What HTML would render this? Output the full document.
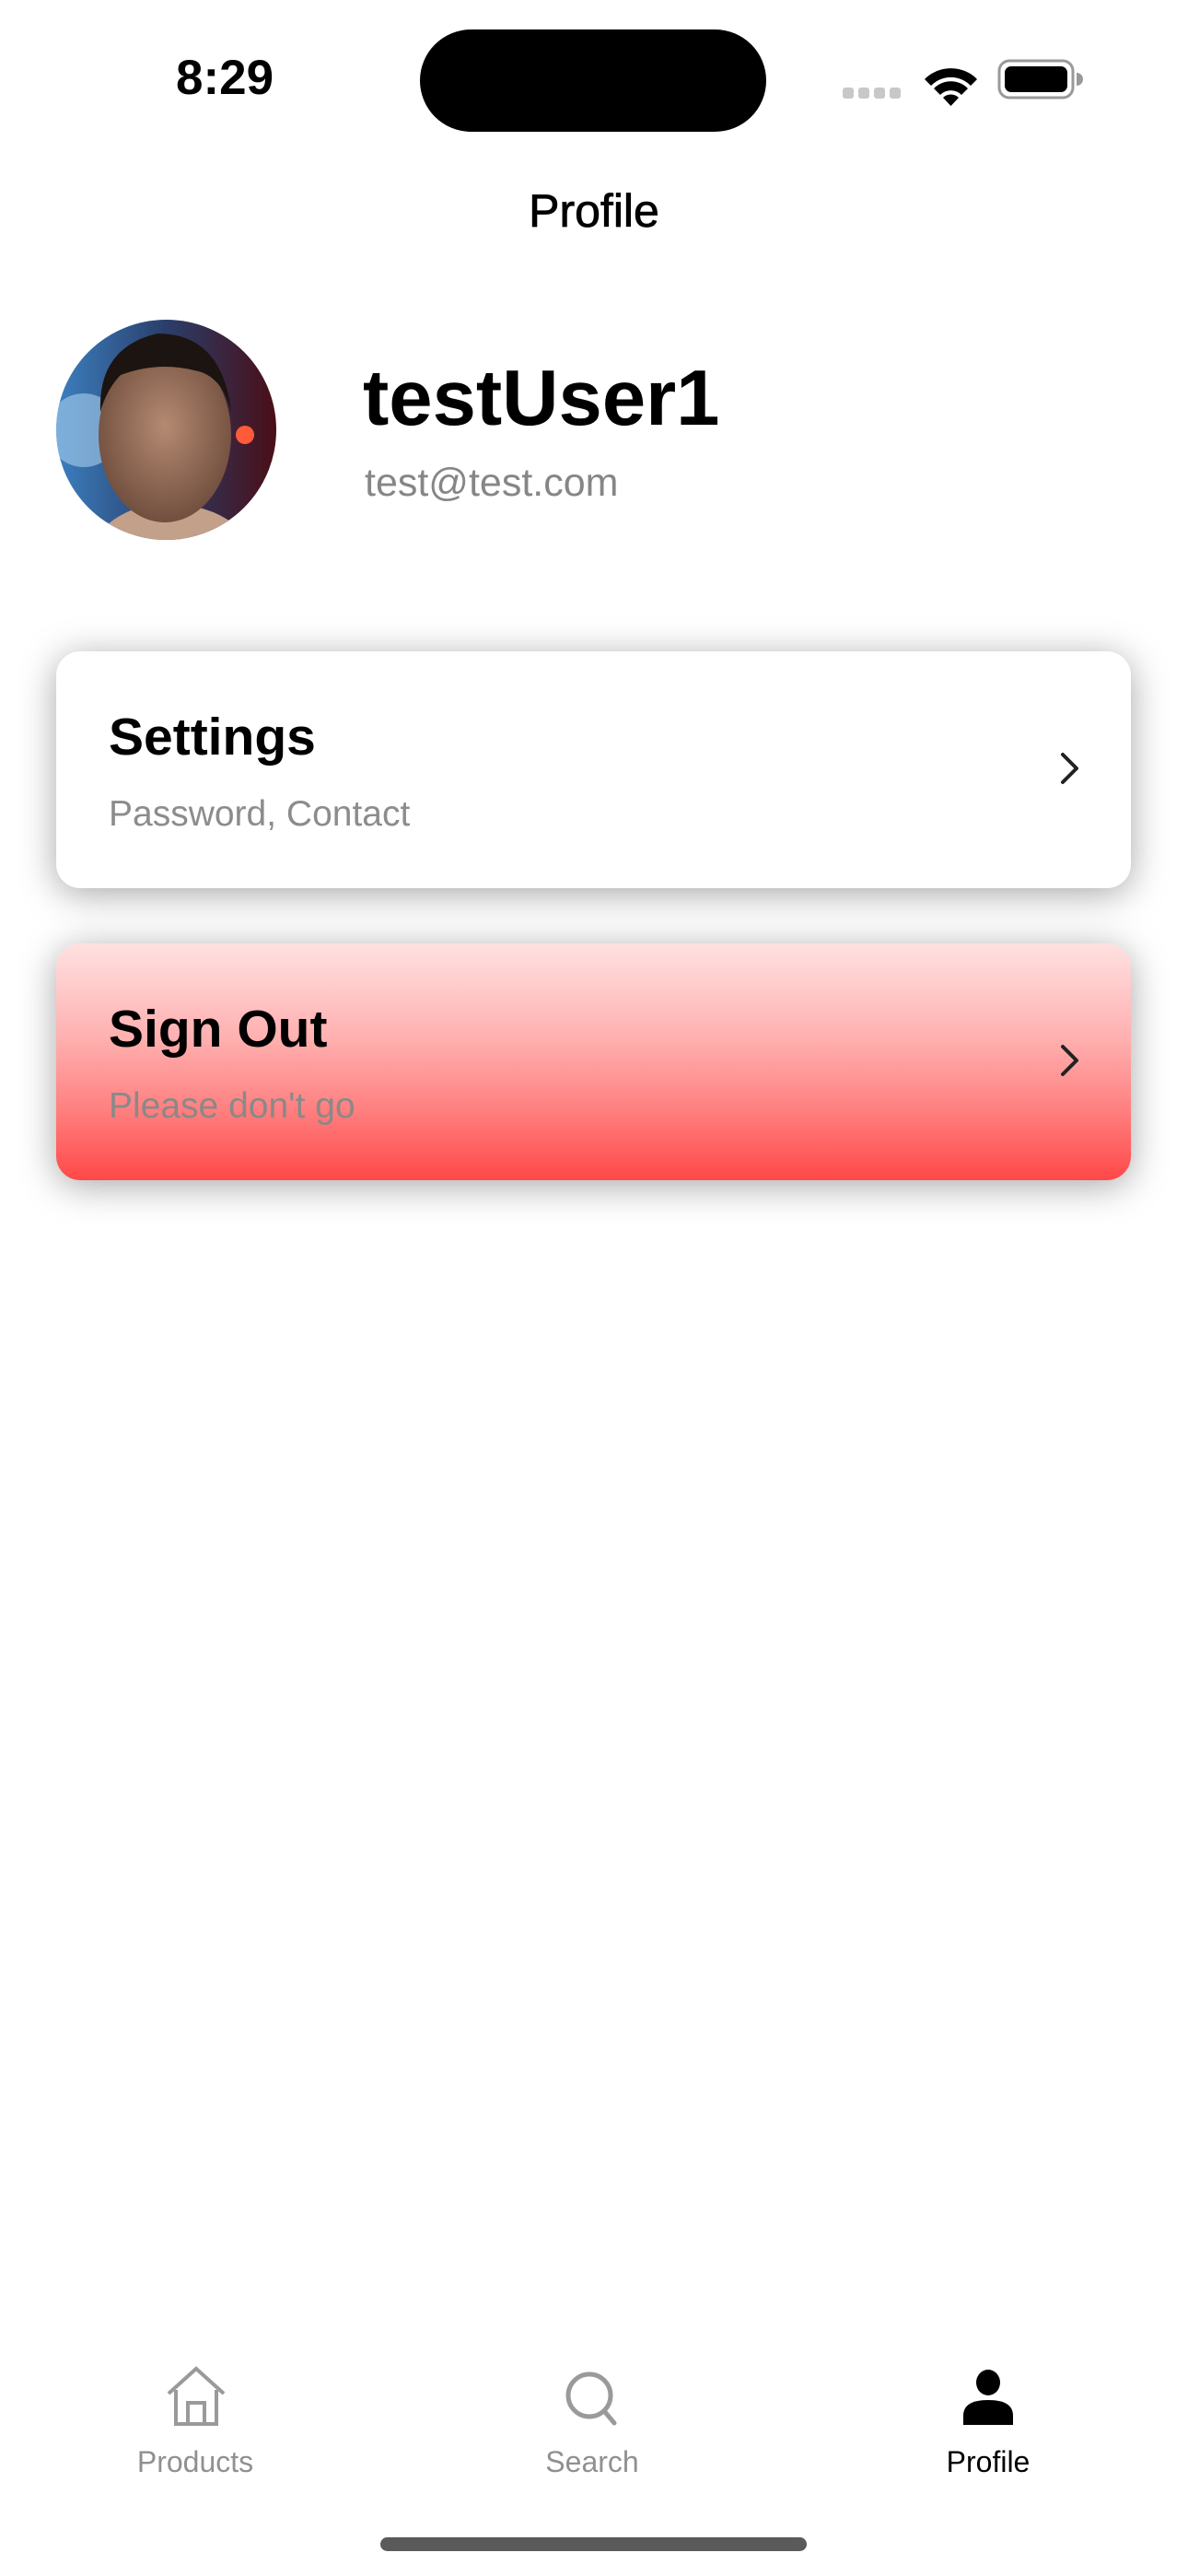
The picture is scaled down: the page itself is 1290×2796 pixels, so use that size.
<!DOCTYPE html>
<html><head><meta charset="utf-8">
<style>
html,body{margin:0;padding:0;background:#fff;}
body{width:1290px;height:2796px;position:relative;overflow:hidden;font-family:"Liberation Sans",sans-serif;}
.abs{position:absolute;}
.card{position:absolute;left:61px;width:1167px;height:257px;border-radius:26px;box-shadow:0 6px 40px rgba(0,0,0,0.35);}
.ttl{position:absolute;left:57px;font-weight:bold;font-size:57px;color:#000;line-height:1;}
.sub{position:absolute;left:57px;font-size:39px;color:#8c8c8c;line-height:1;}
.chev{position:absolute;left:1090px;}
.lbl{position:absolute;font-size:32px;width:240px;text-align:center;line-height:1;}
</style></head><body>

<div class="abs" style="left:191px;top:58px;font-size:53px;font-weight:bold;line-height:1;">8:29</div>
<div class="abs" style="left:456px;top:32px;width:376px;height:111px;border-radius:56px;background:#000;"></div>
<svg class="abs" style="left:910px;top:60px" width="270" height="55" viewBox="910 60 270 55">
 <rect x="915" y="95" width="12" height="12" rx="3" fill="#c8c8c8"/>
 <rect x="932" y="95" width="12" height="12" rx="3" fill="#c8c8c8"/>
 <rect x="949" y="95" width="12" height="12" rx="3" fill="#c8c8c8"/>
 <rect x="966" y="95" width="12" height="12" rx="3" fill="#c8c8c8"/>
 <path d="M1004 86 A40 40 0 0 1 1061 86 L1054 93 A30 30 0 0 0 1011 93 Z" fill="#000"/>
 <path d="M1014 96 A26 26 0 0 1 1051 96 L1044 103 A16 16 0 0 0 1021 103 Z" fill="#000"/>
 <path d="M1024 106 A12 12 0 0 1 1041 106 L1032.5 115 Z" fill="#000"/>
 <rect x="1085" y="66" width="80" height="40" rx="11" fill="none" stroke="#999" stroke-width="3"/>
 <rect x="1091" y="72" width="68" height="28" rx="7" fill="#000"/>
 <path d="M1169 79 A7 7 0 0 1 1169 93 Z" fill="#999"/>
</svg>

<div class="abs" style="left:0;width:1290px;top:204px;text-align:center;font-size:50px;line-height:1;-webkit-text-stroke:0.8px #000;">Profile</div>

<svg class="abs" style="left:61px;top:347px" width="239" height="239" viewBox="0 0 239 239">
 <defs>
  <clipPath id="c"><circle cx="119.5" cy="119.5" r="119.5"/></clipPath>
  <linearGradient id="bg" x1="0" x2="1" y1="0" y2="0"><stop offset="0" stop-color="#3c7fc0"/><stop offset="0.5" stop-color="#2a3e6a"/><stop offset="1" stop-color="#4a0e16"/></linearGradient>
  <radialGradient id="sk" cx="0.5" cy="0.45" r="0.6"><stop offset="0" stop-color="#b58a72"/><stop offset="1" stop-color="#6b4a3a"/></radialGradient>
 </defs>
 <g clip-path="url(#c)">
  <rect width="239" height="239" fill="url(#bg)"/>
  <circle cx="30" cy="120" r="40" fill="#a9d0ef" opacity="0.6"/>
  <circle cx="205" cy="125" r="10" fill="#ff5a3a"/>
  <path d="M40 239 Q70 200 120 200 Q180 200 210 239Z" fill="#c2a08a"/>
  <ellipse cx="118" cy="125" rx="72" ry="95" fill="url(#sk)"/>
  <path d="M48 100 Q45 30 110 15 Q180 15 190 100 Q180 60 150 55 Q110 45 70 60 Q55 75 48 100Z" fill="#1b1410"/>
 </g>
</svg>

<div class="abs" style="left:394px;top:390px;font-size:85px;font-weight:bold;line-height:1;">testUser1</div>
<div class="abs" style="left:396px;top:503px;font-size:43px;color:#868686;line-height:1;">test@test.com</div>

<div class="card" style="top:707px;background:#fff;">
 <div class="ttl" style="top:65px;">Settings</div>
 <div class="sub" style="top:157px;">Password, Contact</div>
 <svg class="chev" style="top:107px" width="30" height="40" viewBox="0 0 30 40"><path d="M3 5 L18 20 L3 35" fill="none" stroke="#222" stroke-width="4" stroke-linecap="round" stroke-linejoin="round"/></svg>
</div>

<div class="card" style="top:1024px;background:linear-gradient(#ffe1e1,#ffb0b0 40%,#ff8080 70%,#ff4848);">
 <div class="ttl" style="top:65px;">Sign Out</div>
 <div class="sub" style="top:157px;color:#8c8888;">Please don't go</div>
 <svg class="chev" style="top:107px" width="30" height="40" viewBox="0 0 30 40"><path d="M3 5 L18 20 L3 35" fill="none" stroke="#222" stroke-width="4" stroke-linecap="round" stroke-linejoin="round"/></svg>
</div>

<svg class="abs" style="left:180px;top:2568px" width="66" height="66" viewBox="0 0 66 66">
 <path d="M3 30 L33 3 L63 30" fill="none" stroke="#9a9a9a" stroke-width="4"/>
 <path d="M11 26 L11 63 L55 63 L55 26 M24 63 L24 40 L42 40 L42 63" fill="none" stroke="#9a9a9a" stroke-width="4"/>
</svg>
<svg class="abs" style="left:612px;top:2572px" width="64" height="64" viewBox="0 0 64 64">
 <circle cx="28" cy="28" r="23" fill="none" stroke="#9a9a9a" stroke-width="5"/>
 <path d="M45 46 L55 58" stroke="#9a9a9a" stroke-width="5" stroke-linecap="round"/>
</svg>
<svg class="abs" style="left:1045px;top:2572px" width="56" height="60" viewBox="0 0 56 60">
 <ellipse cx="28" cy="14" rx="13" ry="14" fill="#000"/>
 <path d="M1 60 L1 50 Q1 33 28 33 Q55 33 55 50 L55 60 Z" fill="#000"/>
</svg>
<div class="lbl" style="left:92px;top:2656px;color:#909090;">Products</div>
<div class="lbl" style="left:523px;top:2656px;color:#909090;">Search</div>
<div class="lbl" style="left:953px;top:2656px;color:#000;">Profile</div>

<div class="abs" style="left:413px;top:2754px;width:463px;height:15px;border-radius:8px;background:#5a5a5a;"></div>
</body></html>
